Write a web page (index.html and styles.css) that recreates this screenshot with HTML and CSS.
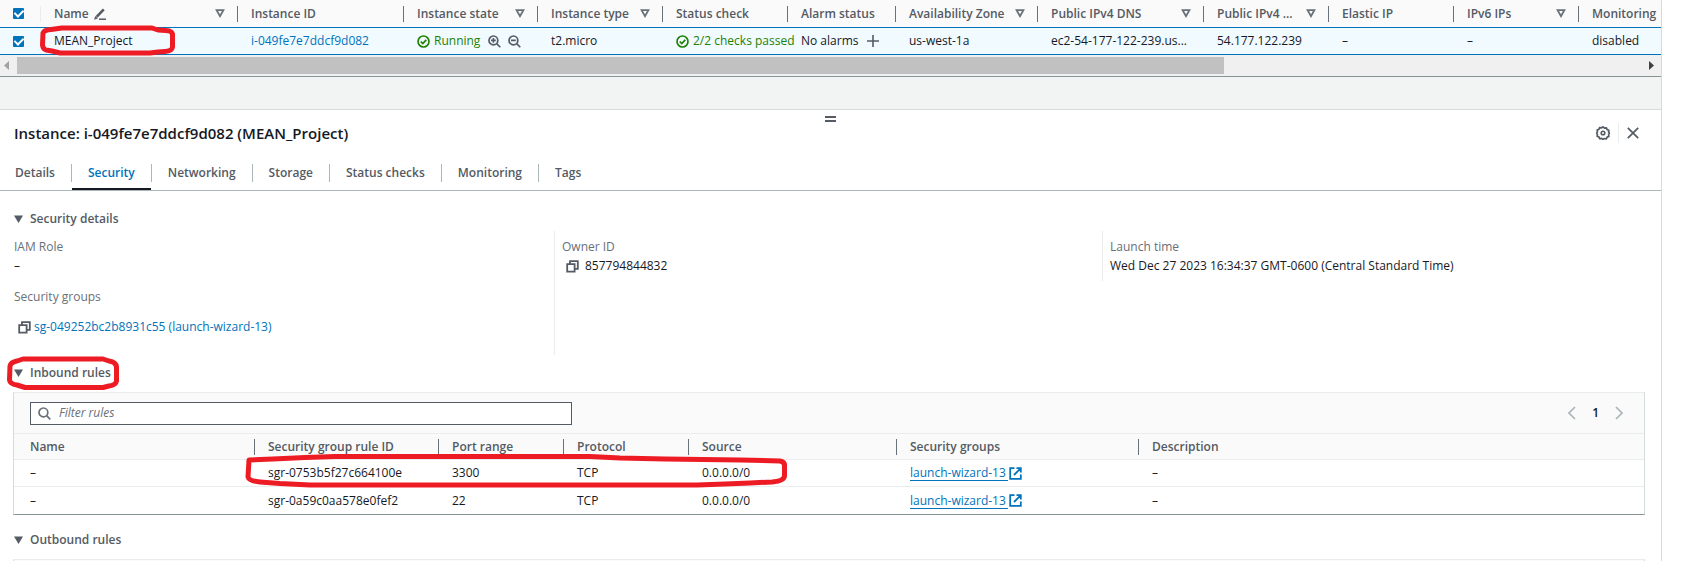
FILE: index.html
```html
<!DOCTYPE html>
<html lang="en">
<head>
<meta charset="utf-8">
<title>Instances</title>
<link rel="stylesheet" href="styles.css">
</head>
<body>
<svg class="sprite" aria-hidden="true">
  <symbol id="sort" viewBox="0 0 10 9"><path d="M1.6 1.2h6.8L5 7.2z" fill="none" stroke="currentColor" stroke-width="1.8"/></symbol>
  <symbol id="ok" viewBox="0 0 14 14"><circle cx="7" cy="7" r="5.9" fill="none" stroke="currentColor" stroke-width="1.8"/><path d="M4 7l2.2 2.3L10 5.2" fill="none" stroke="currentColor" stroke-width="1.8"/></symbol>
  <symbol id="copy" viewBox="0 0 13 13"><path d="M1.2 4.2h7.4v7.4H1.2z M4 4V1.2h7.8v7.6H9" fill="none" stroke="currentColor" stroke-width="1.8"/></symbol>
  <symbol id="external" viewBox="0 0 13 13"><path d="M5.5 1.2H1.2v10.6h10.6V7.5M7.5 1.2h4.3v4.3M11.6 1.4L5 8" fill="none" stroke="currentColor" stroke-width="1.8"/></symbol>
  <symbol id="caret" viewBox="0 0 9 8"><path d="M0 .5h9L4.5 8z" fill="currentColor"/></symbol>
</svg>

<div class="page">
  <div class="instances">
    <table class="grid instance-table">
      <colgroup>
        <col class="w-check"><col class="w-name"><col class="w-id"><col class="w-state"><col class="w-std"><col class="w-std"><col class="w-alarm"><col class="w-zone"><col class="w-id"><col class="w-std"><col class="w-std"><col class="w-std"><col>
      </colgroup>
      <thead>
        <tr>
          <th class="check light"><input type="checkbox" class="tick" aria-label="Select all instances" checked></th>
          <th><div class="head"><span>Name <svg class="pencil" width="12" height="12" viewBox="0 0 12 12" aria-hidden="true"><path d="M2.600 8.800L9.800 1.400" fill="none" stroke="currentColor" stroke-width="2.600"/><path d="M0 11.800L1.400 8l2.400 2.400z" fill="currentColor"/><path d="M5 11.200h7" stroke="currentColor" stroke-width="1.500"/></svg></span><svg class="sort"><use href="#sort"/></svg></div></th>
          <th><div class="head"><span>Instance ID</span></div></th>
          <th><div class="head"><span>Instance state</span><svg class="sort"><use href="#sort"/></svg></div></th>
          <th><div class="head"><span>Instance type</span><svg class="sort"><use href="#sort"/></svg></div></th>
          <th><div class="head"><span>Status check</span></div></th>
          <th><div class="head"><span>Alarm status</span></div></th>
          <th><div class="head"><span>Availability Zone</span><svg class="sort"><use href="#sort"/></svg></div></th>
          <th><div class="head"><span>Public IPv4 DNS</span><svg class="sort"><use href="#sort"/></svg></div></th>
          <th><div class="head"><span>Public IPv4 ...</span><svg class="sort"><use href="#sort"/></svg></div></th>
          <th><div class="head"><span>Elastic IP</span></div></th>
          <th><div class="head"><span>IPv6 IPs</span><svg class="sort"><use href="#sort"/></svg></div></th>
          <th><div class="head"><span>Monitoring</span></div></th>
        </tr>
      </thead>
      <tbody>
        <tr>
          <td class="check"><input type="checkbox" class="tick" aria-label="Select MEAN_Project" checked></td>
          <td>MEAN_Project</td>
          <td><a href="#">i-049fe7e7ddcf9d082</a></td>
          <td><div class="status"><svg class="ok"><use href="#ok"/></svg><span>Running</span>
            <button class="icon zoom" aria-label="Filter by this value"><svg width="13" height="13" viewBox="0 0 13 13"><circle cx="5.4" cy="5.4" r="4.4" fill="none" stroke="currentColor" stroke-width="1.7"/><path d="M8.6 8.6L12.3 12.3M3 5.4h4.8M5.4 3v4.8" stroke="currentColor" stroke-width="1.6"/></svg></button>
            <button class="icon" aria-label="Exclude this value"><svg width="13" height="13" viewBox="0 0 13 13"><circle cx="5.4" cy="5.4" r="4.4" fill="none" stroke="currentColor" stroke-width="1.7"/><path d="M8.6 8.6L12.3 12.3M3 5.4h4.8" stroke="currentColor" stroke-width="1.6"/></svg></button></div></td>
          <td>t2.micro</td>
          <td><div class="status"><svg class="ok"><use href="#ok"/></svg><span>2/2 checks passed</span></div></td>
          <td><div class="alarm"><span>No alarms</span><button class="icon" aria-label="Add alarm"><svg width="12" height="12" viewBox="0 0 12 12"><path d="M6 0v12M0 6h12" stroke="currentColor" stroke-width="1.6"/></svg></button></div></td>
          <td>us-west-1a</td>
          <td>ec2-54-177-122-239.us...</td>
          <td>54.177.122.239</td>
          <td>–</td>
          <td>–</td>
          <td>disabled</td>
        </tr>
      </tbody>
    </table>
    <div class="scrollbar">
      <svg class="arrow faded" viewBox="0 0 5 9" aria-hidden="true"><path d="M5 0v9L0 4.500z"/></svg>
      <div class="track"><div class="thumb"></div></div>
      <svg class="arrow" viewBox="0 0 5 9" aria-hidden="true"><path d="M0 0v9l5-4.500z"/></svg>
    </div>
  </div>

  <div class="spacer"></div>

  <main class="panel">
    <button class="handle" aria-label="Resize panel"></button>
    <header class="panel-head">
      <h1>Instance: i-049fe7e7ddcf9d082 (MEAN_Project)</h1>
      <div class="tools">
        <button class="icon" aria-label="Preferences"><svg width="14" height="14" viewBox="0 0 14 14"><path d="M7 .9l1.500 1.100 1.900-.2.700 1.700 1.700.7-.2 1.900L13.500 7l-.9 1.500.2 1.900-1.700.7-.7 1.700-1.900-.2L7 13.300l-1.500-.9-1.900.2-.7-1.700-1.700-.7.2-1.900L.7 7l.7-1.100-.2-1.900 1.700-.7.7-1.700 1.900.2z" fill="none" stroke="currentColor" stroke-width="1.700"/><circle cx="7" cy="7" r="1.800" fill="none" stroke="currentColor" stroke-width="1.600"/></svg></button>
        <button class="icon close" aria-label="Close panel"><svg width="12" height="12" viewBox="0 0 12 12"><path d="M.8.8l10.400 10.400M11.200.8L.8 11.200" stroke="currentColor" stroke-width="1.700"/></svg></button>
      </div>
    </header>

    <nav class="tabs">
      <button><span>Details</span></button>
      <button class="active"><span>Security</span></button>
      <button><span>Networking</span></button>
      <button><span>Storage</span></button>
      <button><span>Status checks</span></button>
      <button><span>Monitoring</span></button>
      <button><span>Tags</span></button>
    </nav>

    <section>
      <h2><button class="toggle"><svg class="caret"><use href="#caret"/></svg>Security details</button></h2>
      <div class="details">
        <dl>
          <dt>IAM Role</dt><dd>–</dd>
          <dt class="second">Security groups</dt>
          <dd class="copyable group"><button class="icon" aria-label="Copy"><svg class="copy"><use href="#copy"/></svg></button><a href="#">sg-049252bc2b8931c55 (launch-wizard-13)</a></dd>
        </dl>
        <dl>
          <dt>Owner ID</dt>
          <dd class="copyable owner"><button class="icon" aria-label="Copy"><svg class="copy"><use href="#copy"/></svg></button><span>857794844832</span></dd>
        </dl>
        <dl class="short">
          <dt>Launch time</dt><dd>Wed Dec 27 2023 16:34:37 GMT-0600 (Central Standard Time)</dd>
        </dl>
      </div>
    </section>

    <section>
      <h2><button class="toggle"><svg class="caret"><use href="#caret"/></svg>Inbound rules</button></h2>
      <div class="card">
        <div class="filter-bar">
          <label class="search"><svg width="13" height="13" viewBox="0 0 13 13" aria-hidden="true"><circle cx="5.400" cy="5.400" r="4.400" fill="none" stroke="currentColor" stroke-width="1.700"/><path d="M8.600 8.600L12.300 12.300" stroke="currentColor" stroke-width="1.700"/></svg><input type="text" placeholder="Filter rules" aria-label="Filter rules"></label>
          <div class="pager">
            <button class="icon" aria-label="Previous page"><svg width="8" height="14" viewBox="0 0 8 14"><path d="M7 1L1 7l6 6" fill="none" stroke="currentColor" stroke-width="1.700"/></svg></button>
            <button class="number">1</button>
            <button class="icon" aria-label="Next page"><svg width="8" height="14" viewBox="0 0 8 14"><path d="M1 1l6 6-6 6" fill="none" stroke="currentColor" stroke-width="1.700"/></svg></button>
          </div>
        </div>
        <table class="grid rules">
          <colgroup><col class="r-name"><col class="r-id"><col class="w-std"><col class="w-std"><col class="r-source"><col class="r-group"><col></colgroup>
          <thead><tr><th><div class="head">Name</div></th><th><div class="head">Security group rule ID</div></th><th><div class="head">Port range</div></th><th><div class="head">Protocol</div></th><th><div class="head">Source</div></th><th><div class="head">Security groups</div></th><th><div class="head">Description</div></th></tr></thead>
          <tbody>
            <tr><td>–</td><td>sgr-0753b5f27c664100e</td><td>3300</td><td>TCP</td><td>0.0.0.0/0</td><td><a class="external" href="#"><span>launch-wizard-13</span><svg><use href="#external"/></svg></a></td><td>–</td></tr>
            <tr><td>–</td><td>sgr-0a59c0aa578e0fef2</td><td>22</td><td>TCP</td><td>0.0.0.0/0</td><td><a class="external" href="#"><span>launch-wizard-13</span><svg><use href="#external"/></svg></a></td><td>–</td></tr>
          </tbody>
        </table>
      </div>
    </section>

    <section>
      <h2><button class="toggle"><svg class="caret"><use href="#caret"/></svg>Outbound rules</button></h2>
      <div class="card"><div class="filter-bar"></div></div>
    </section>
  </main>

  <svg class="mark mark-name" viewBox="0 0 135 31" aria-hidden="true"><path d="M3 8Q4 5 11 4.500L22 3H112L118 5 126 5.500Q132 6 132.500 9V22Q132 26 125 26.500L118 27 110 28H20L12 26 6 25Q3 24 2.500 20Z"/></svg>
  <svg class="mark mark-inbound" viewBox="0 0 112 34" aria-hidden="true"><path d="M3 10Q4 6 10 5L16 3H96L102 5Q109 6 109.500 11V25Q109 29 102 30L96 31.500H18L10 29Q3 28 2.500 24Z"/></svg>
  <svg class="mark mark-rule" viewBox="0 0 542 34" aria-hidden="true"><path d="M4 6L28 5 60 3.500 90 2.500H345L375 4 420 5 495 6 535 7Q540 8 539.500 12V22Q539 27 527 28L505 29 480 30 452 31H65L35 29.500 15 28Q4 27 3 23Z"/></svg>
</div>
</body>
</html>
```

FILE: styles.css
```css
* { box-sizing: border-box; }

body {
  margin: 0;
  background: #fff;
  color: #16191f;
  font: 12px/16px "Open Sans", "Noto Sans", sans-serif;
}

a { color: #0073bb; text-decoration: none; }
button { padding: 0; border: 0; background: none; color: inherit; font: inherit; cursor: pointer; }
svg { display: block; flex: none; }
h1, h2, dl, dd { margin: 0; }

.sprite { display: none; }

.page {
  position: relative;
  height: 100vh;
  margin-right: 30px;
  border-right: 1px solid #d5dbdb;
  overflow: hidden;
}

.icon { display: flex; color: #545b64; }

/* Tables */
.grid { width: 100%; table-layout: fixed; border-collapse: separate; border-spacing: 0; }
.grid th, .grid td { padding: 0 0 0 13px; text-align: left; white-space: nowrap; }
.grid th { height: 26px; padding-left: 0; background: #fafafa; color: #545b64; font-weight: 600; }

.head {
  display: flex;
  align-items: center;
  justify-content: space-between;
  height: 16px;
  padding: 0 12px 0 13px;
  border-right: 1px solid #687078;
}
th:last-child .head { border-right: 0; }

.w-check { width: 41px; }
.w-name { width: 197px; }
.w-id { width: 166px; }
.w-state { width: 134px; }
.w-std { width: 125px; }
.w-alarm { width: 108px; }
.w-zone { width: 142px; }

.instance-table th { height: 27px; }
.instance-table td {
  height: 28px;
  background: #f1faff;
  border: solid #0073bb;
  border-width: 1px 0;
}
.instance-table .check { padding-left: 13px; }
.instance-table .light { background: linear-gradient(#eaeded, #eaeded) right / 1px 16px no-repeat #fafafa; }

.sort { width: 10px; height: 9px; color: #687078; }
.pencil { display: inline-block; margin-left: 2px; vertical-align: -2px; }

.tick {
  display: grid;
  place-items: center;
  width: 11px;
  height: 11px;
  margin: 0;
  appearance: none;
  border-radius: 1px;
  background: #0073bb;
}
.tick::after {
  content: "";
  width: 4px;
  height: 7px;
  margin-bottom: 2px;
  border: solid #fff;
  border-width: 0 2px 2px 0;
  transform: rotate(45deg);
}

.status { display: flex; align-items: center; gap: 4px; color: #1d8102; }
.ok { width: 13px; height: 13px; }
.zoom { margin: 0 3px 0 4px; }
.alarm { display: flex; align-items: center; gap: 9px; }

/* Horizontal scrollbar */
.scrollbar {
  display: flex;
  align-items: center;
  height: 22px;
  padding: 0 7px 0 4px;
  border-bottom: 1px solid #879596;
  background: #f0f0f0;
}
.arrow { width: 5px; height: 9px; fill: #404040; }
.faded { fill: #a3a3a3; }
.track { flex: 1; margin: 0 8px; }
.thumb { width: 74.3%; height: 17px; background: #c1c1c1; }

.spacer { height: 32px; background: #f2f3f3; }

/* Detail panel */
.panel { border-top: 1px solid #d5dbdb; background: #fff; }

.handle {
  display: block;
  width: 11px;
  height: 6px;
  margin: 6px auto 0;
  border: solid #545b64;
  border-width: 2px 0;
}

.panel-head {
  display: flex;
  align-items: center;
  justify-content: space-between;
  height: 22px;
  padding: 0 22px 0 14px;
}
h1 { font-size: 15px; line-height: 20px; font-weight: 600; }
.tools { display: flex; align-items: center; gap: 8px; }
.close { padding: 4px 0 4px 8px; border-left: 1px solid #eaeded; }

.tabs { display: flex; height: 47px; padding-top: 17px; border-bottom: 1px solid #aab7b8; }
.tabs button {
  display: flex;
  align-items: flex-start;
  height: 29px;
  padding-top: 3px;
  color: #545b64;
  font-weight: 600;
}
.tabs span { height: 18px; padding: 0 16px; line-height: 18px; box-shadow: 1px 0 #aab7b8; }
.tabs button:first-child span { padding-left: 15px; }
.tabs button:last-child span { box-shadow: none; }
.tabs button + button { margin-left: 1px; }
.tabs .active { border-bottom: 2px solid #16191f; color: #0073bb; }

h2 { padding-top: 20px; font-size: 12px; line-height: 16px; font-weight: 600; }
.toggle { display: flex; align-items: center; gap: 7px; margin-left: 14px; color: #545b64; }
.caret { width: 9px; height: 8px; }

.details { display: grid; grid-template-columns: repeat(3, 1fr); margin: 4px 11px 0 6px; }
.details dl { min-height: 124px; padding: 8px 0 0 7px; border-left: 1px solid #eaeded; }
.details dl:first-child { border-left-color: transparent; }
.details .short { align-self: start; min-height: 50px; }
dt { color: #687078; }
dd { padding-top: 3px; }
.second { padding-top: 15px; }
.copyable { display: flex; align-items: center; padding-left: 4px; }
.group { gap: 3px; padding-top: 14px; }
.owner { gap: 6px; }
.copy { width: 13px; height: 13px; }

/* Rule cards */
section + section h2 { padding-top: 10px; }
.card {
  margin: 11px 16px 7px 13px;
  border: 1px solid #d5dbdb;
  border-top-color: #eaeded;
  border-bottom-color: #879596;
}
.filter-bar {
  display: flex;
  align-items: center;
  justify-content: space-between;
  height: 41px;
  padding: 0 21px 0 16px;
  border-bottom: 1px solid #eaeded;
  background: #fafafa;
}
.search {
  display: flex;
  align-items: center;
  gap: 8px;
  width: 34%;
  height: 23px;
  padding-left: 7px;
  border: 1px solid #545b64;
  background: #fff;
  color: #687078;
}
.search input { flex: 1; padding: 0; border: 0; outline: 0; font: inherit; }
.search ::placeholder { color: #687078; font-style: italic; opacity: 1; }
.pager { display: flex; align-items: center; gap: 16px; }
.pager .icon { color: #aab7b8; }
.number { font-weight: 600; }

.rules th { border-bottom: 1px solid #eaeded; }
.rules td { height: 27px; border-bottom: 1px solid #eaeded; }
.rules tr:last-child td { border-bottom: 0; }
.rules tr > :first-child { padding-left: 16px; }
.rules th:first-child .head { padding-left: 0; }
.r-name { width: 241px; }
.r-id { width: 184px; }
.r-source { width: 208px; }
.r-group { width: 242px; }

.external { display: inline-flex; align-items: center; gap: 1px; vertical-align: top; }
.external span { padding-right: 2px; border-bottom: 1px solid #0073bb; line-height: 15px; }
.external svg { width: 13px; height: 13px; }

/* Hand-drawn highlight outlines */
.mark { position: absolute; fill: none; stroke: #ed1c24; stroke-width: 5; stroke-linejoin: round; pointer-events: none; }
.mark-name { left: 40px; top: 25px; width: 135px; height: 31px; }
.mark-inbound { left: 7px; top: 356px; width: 112px; height: 34px; }
.mark-rule { left: 245px; top: 454px; width: 542px; height: 34px; }
```
